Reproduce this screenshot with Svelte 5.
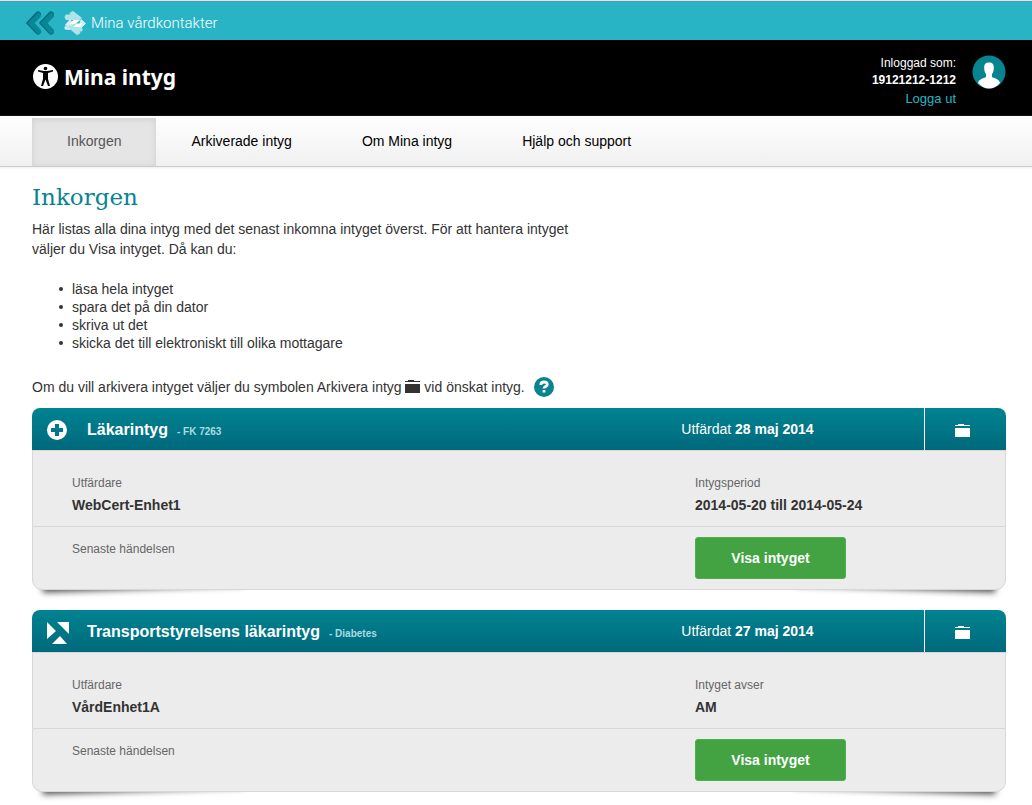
<script>
  const tabs = ['Inkorgen', 'Arkiverade intyg', 'Om Mina intyg', 'Hjälp och support']
  let activeTab = $state('Inkorgen')

  const steps = [
    'läsa hela intyget',
    'spara det på din dator',
    'skriva ut det',
    'skicka det till elektroniskt till olika mottagare'
  ]

  const certificates = [
    {
      icon: 'plus',
      title: 'Läkarintyg',
      type: 'FK 7263',
      issued: '28 maj 2014',
      issuer: 'WebCert-Enhet1',
      label: 'Intygsperiod',
      value: '2014-05-20 till 2014-05-24'
    },
    {
      icon: 'transport',
      title: 'Transportstyrelsens läkarintyg',
      type: 'Diabetes',
      issued: '27 maj 2014',
      issuer: 'VårdEnhet1A',
      label: 'Intyget avser',
      value: 'AM'
    }
  ]
</script>

{#snippet archiveIcon()}
  <svg class="archive-icon" width="15" height="13" viewBox="0 0 15 13" fill="currentColor" aria-hidden="true">
    <path d="M0 1h3V0h6v1h6v1H0zM0 4h15v9H0z"/>
  </svg>
{/snippet}

<div class="topbar">
  <a href="#tillbaka" aria-label="Tillbaka">
    <svg width="30" height="24" viewBox="0 0 30 24" fill="none" stroke-linecap="round">
      <path d="M14 3.500L6 12l8 8.500M27 3.500L19 12l8 8.500" stroke="#05697a" stroke-width="6"/>
      <path d="M14.500 4.500L7 12.200l7.500 8M27.500 4.500L20 12.200l7.500 8" stroke="#078896" stroke-width="5"/>
    </svg>
  </a>
  <a class="portal" href="#vardkontakter">
    <svg width="22" height="24" viewBox="0 0 22 24" aria-hidden="true">
      <g fill="#b0e2e9" stroke="#b0e2e9" stroke-width="1" stroke-linejoin="round">
        <path d="M2 4h5L6 2l3-1.500L17.500 7 13 11l-3-1 1.500-1.500H2L1 6z"/>
        <path d="M18 20h-3l1 2-3 1.500L5 17l4-4 3 1-1.500 2H17l1 2z"/>
      </g>
      <g fill="#cdeef2" stroke="#cdeef2" stroke-width="1" stroke-linejoin="round">
        <path d="M17 8.500l4.500 4L17 17l-3-1.500 2-3z"/>
        <path d="M4.500 16.500L1 15.500 1 18l5 .5zM6 8.500L1.500 14 4 16l5-3z"/>
      </g>
      <path d="M5 13l4.500-4H16l-4.500 4zM9.500 16l3-3.500h6.500L15 16z" fill="#fff"/>
    </svg>
    <span>Mina vårdkontakter</span>
  </a>
</div>

<header>
  <a class="logo" href="#start">
    <svg width="25" height="25" viewBox="0 0 25 25" aria-hidden="true">
      <circle cx="12.500" cy="12.500" r="12.500" fill="#fff"/>
      <circle cx="12.500" cy="4.500" r="1.800"/>
      <path d="M5 6l6 1h3l6-1v1.500l-5 1.500v6l2 7h-2l-2.500-6.500L10 22H8l2-7V9L5 7.500z"/>
    </svg>
    <span>Mina intyg</span>
  </a>
  <div class="account">
    <div class="user">
      <span>Inloggad som:</span>
      <strong>19121212-1212</strong>
      <a href="#logga-ut">Logga ut</a>
    </div>
    <svg width="34" height="34" viewBox="0 0 34 34" aria-hidden="true">
      <circle cx="17" cy="17" r="16.500" fill="#078490"/>
      <path d="M17 7.500c3.500 0 4.800 1.500 4.800 5 0 3-.5 5-1.800 6.500v3c1.500 1.300 7 1.500 8 6-3 3.500-6.500 5.500-11 5.500s-8-2-11-5.500c1-4.500 6.500-4.700 8-6v-3c-1.300-1.500-1.800-3.500-1.800-6.500 0-3.500 1.300-5 4.800-5z" fill="#fff"/>
    </svg>
  </div>
</header>

<nav>
  {#each tabs as tab}
    <button class:active={activeTab == tab} onclick={() => activeTab = tab}>{tab}</button>
  {/each}
</nav>

<main>
  <h1>Inkorgen</h1>
  <p class="intro">
    Här listas alla dina intyg med det senast inkomna intyget överst. För att hantera intyget
    väljer du Visa intyget. Då kan du:
  </p>
  <ul>
    {#each steps as step}
      <li>{step}</li>
    {/each}
  </ul>
  <div class="hint">
    <p>Om du vill arkivera intyget väljer du symbolen Arkivera intyg {@render archiveIcon()} vid önskat intyg.</p>
    <button aria-label="Hjälp">
      <svg width="20" height="20" viewBox="0 0 20 20">
        <circle cx="10" cy="10" r="10" fill="#078490"/>
        <path d="M6.800 8c0-2 1.200-3 3.200-3s3.300 1 3.300 2.500C13.300 9.500 10 9.500 10 11.500" fill="none" stroke="#fff" stroke-width="2.800"/>
        <path d="M8.600 13h2.800v2.500H8.600z" fill="#fff"/>
      </svg>
    </button>
  </div>

  {#each certificates as cert}
    <article class="card">
      <div class="card-header">
        <div class="name">
          {#if cert.icon == 'plus'}
            <svg width="24" height="24" viewBox="0 0 24 24" aria-hidden="true">
              <circle cx="10" cy="12" r="10" fill="#fff"/>
              <path d="M10 6v12M4 12h12" stroke="#007889" stroke-width="4"/>
            </svg>
          {:else}
            <svg width="24" height="24" viewBox="0 0 24 24" fill="#fff" aria-hidden="true">
              <path d="M0 2l9 9-9 8zM10 2h12v12zM5 24l8-8 7 8z"/>
            </svg>
          {/if}
          <h2>{cert.title}</h2>
          <span class="type">- {cert.type}</span>
        </div>
        <div class="issued">Utfärdat <strong>{cert.issued}</strong></div>
        <button class="archive" aria-label="Arkivera intyg">{@render archiveIcon()}</button>
      </div>
      <div class="row">
        <div>
          <span class="label">Utfärdare</span>
          <strong>{cert.issuer}</strong>
        </div>
        <div>
          <span class="label">{cert.label}</span>
          <strong>{cert.value}</strong>
        </div>
      </div>
      <div class="row events">
        <div><span class="label">Senaste händelsen</span></div>
        <div><button class="show">Visa intyget</button></div>
      </div>
    </article>
  {/each}
</main>

<style>
  :global(body) {
    background: #fff;
    color: #333;
    font: 14px/20px "Liberation Sans", Arial, sans-serif;
  }

  button {
    border: none;
    padding: 0;
    background: none;
    font: inherit;
    cursor: pointer;
  }

  a {
    color: inherit;
    text-decoration: none;
  }

  svg {
    flex: none;
    display: block;
  }

  .topbar {
    box-sizing: border-box;
    height: 40px;
    padding: 4px 24px 0;
    border-top: 1px solid #d9e6ec;
    box-shadow: inset 0 1px #5c97a6;
    background: #29b4c6;
    display: flex;
    align-items: center;
    gap: 10px;
  }

  .portal {
    display: flex;
    align-items: center;
    gap: 5px;
    color: #fff;
    font: 300 15px/20px Roboto, sans-serif;
  }

  header {
    height: 76px;
    padding: 0 26px 0 33px;
    background: #000;
    color: #fff;
    display: flex;
    justify-content: space-between;
  }

  .logo {
    display: flex;
    align-items: center;
    gap: 6px;
    padding-bottom: 3px;
    font: bold 21px/28px "Noto Sans", sans-serif;
  }

  .account {
    display: flex;
    gap: 16px;
    padding-top: 15px;
  }

  .user {
    display: flex;
    flex-direction: column;
    font-size: 12px;
    line-height: 17px;
    text-align: right;
  }

  .user a {
    color: #29b4c6;
    font-size: 13px;
    line-height: 19px;
  }

  nav {
    display: flex;
    height: 48px;
    padding: 2px 32px 0;
    border-bottom: 1px solid #ccc;
    box-shadow: 0 1px 2px #eee;
    background: linear-gradient(#fff, #f0f0f0);
  }

  nav button {
    padding: 0 35px 2px;
    color: #000;
  }

  nav button.active {
    background: #e5e5e5;
    box-shadow: inset 0 1px 6px #ccc;
    color: #555;
  }

  main {
    padding: 16px 26px 12px 32px;
  }

  h1 {
    margin: 0;
    color: #078490;
    font: 23px/28px "DejaVu Serif", serif;
  }

  p {
    margin: 0;
  }

  .intro {
    max-width: 560px;
    margin-top: 8px;
  }

  ul {
    margin: 21px 0 0;
    padding: 0 0 0 27px;
    list-style: none;
    line-height: 18px;
  }

  li {
    display: flex;
    align-items: center;
    gap: 9px;
  }

  li::before {
    content: '';
    width: 4px;
    height: 4px;
    border-radius: 50%;
    background: #333;
  }

  .hint {
    display: flex;
    gap: 9px;
    margin: 25px 0 11px;
  }

  .hint .archive-icon {
    display: inline-block;
    vertical-align: -1px;
  }

  .card {
    position: relative;
    border-radius: 8px;
    margin-bottom: 20px;
    isolation: isolate;
  }

  /* lifted corners under the card */
  .card::before,
  .card::after {
    content: '';
    position: absolute;
    z-index: -1;
    bottom: 11px;
    width: 200px;
    height: 20px;
    box-shadow: 0 10px 6px rgba(0, 0, 0, .7);
  }

  .card::before {
    left: 10px;
    transform: rotate(-2deg);
  }

  .card::after {
    right: 10px;
    transform: rotate(2deg);
  }

  .card-header {
    display: grid;
    grid-template-columns: 2fr 1fr;
    position: relative;
    height: 42px;
    align-items: center;
    border-radius: 8px 8px 0 0;
    background: linear-gradient(#008391, #00697c);
    color: #fff;
  }

  .name {
    display: flex;
    align-items: center;
    padding: 2px 0 0 15px;
  }

  h2 {
    margin: 0 9px 0 16px;
    font-size: 16px;
    line-height: 20px;
  }

  .type {
    padding-top: 4px;
    color: #a9dbe2;
    font-size: 10px;
    font-weight: bold;
  }

  .archive {
    position: absolute;
    top: 0;
    right: 0;
    width: 82px;
    height: 42px;
    border-left: 1px solid #fff;
    color: #fff;
    display: flex;
    align-items: center;
    justify-content: center;
    padding: 3px 6px 0 0;
  }

  .row {
    display: grid;
    grid-template-columns: 2fr 1fr;
    box-sizing: border-box;
    min-height: 76px;
    padding-top: 22px;
    border: 1px solid #d8d8d8;
    border-bottom: none;
    background: #ececec;
  }

  .row > :first-child {
    padding-left: 39px;
  }

  .row > :last-child {
    padding-left: 14px;
  }

  .label {
    display: block;
    color: #666;
    font-size: 12px;
  }

  .row strong {
    display: block;
    line-height: 24px;
  }

  .row.events {
    min-height: 64px;
    padding-top: 10px;
    border-bottom: 1px solid #d8d8d8;
    border-radius: 0 0 10px 10px;
  }

  .events .label {
    padding-top: 2px;
  }

  .show {
    width: 151px;
    height: 42px;
    padding-bottom: 1px;
    border: 1px solid #4cae4c;
    border-radius: 3px;
    background: #43a343;
    color: #fff;
    font-weight: bold;
  }
</style>
